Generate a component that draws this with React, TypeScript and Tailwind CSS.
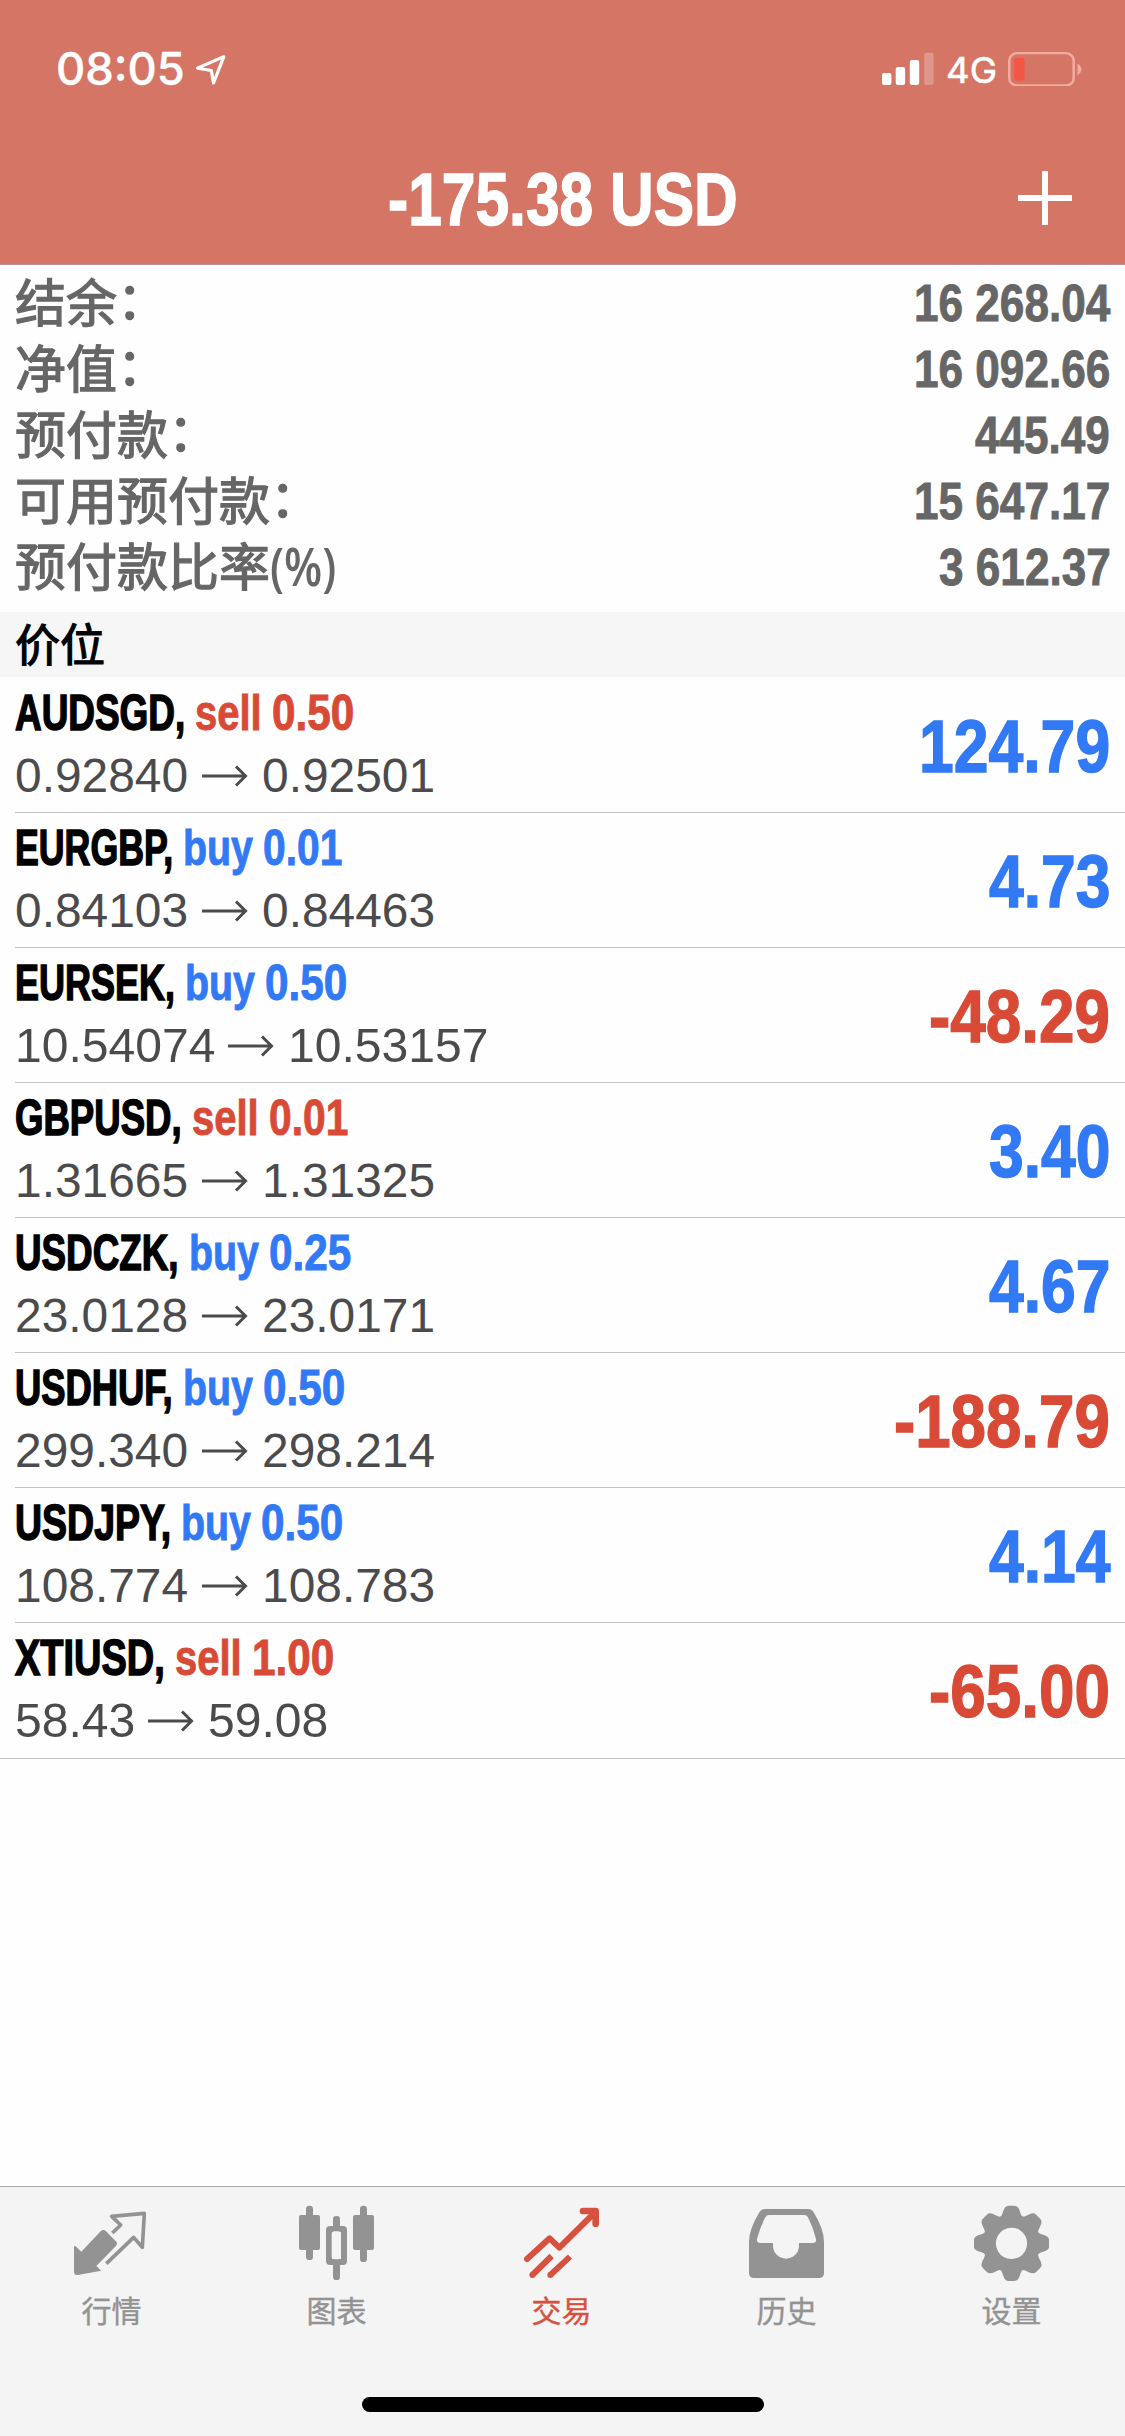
import { useLayoutEffect, useRef, useState, type ReactNode } from 'react';

/** Condenses its text horizontally so that it fills the given width. */
function Condensed({ width, children, className = '' }: { width: number; children: ReactNode; className?: string }) {
  const ref = useRef<HTMLSpanElement>(null);
  const [scale, setScale] = useState(1);
  useLayoutEffect(() => {
    if (ref.current) setScale(width / ref.current.offsetWidth);
  }, [width]);
  return (
    <span className={`inline-block whitespace-pre ${className}`} style={{ width }}>
      <span ref={ref} className="inline-block origin-left" style={{ transform: `scaleX(${scale})` }}>
        {children}
      </span>
    </span>
  );
}

const DIGIT = 24.5;
const summary = [
  { label: '结余', suffix: '：', value: '16 268.04' },
  { label: '净值', suffix: '：', value: '16 092.66' },
  { label: '预付款', suffix: '：', value: '445.49' },
  { label: '可用预付款', suffix: '：', value: '15 647.17' },
  { label: '预付款比率', suffix: '(%)', value: '3 612.37' },
];

/** Advance width of a figure string, where points and spaces are half a digit wide. */
const figureWidth = (text: string, digit: number) =>
  [...text].reduce((sum, ch) => sum + (/\d/.test(ch) ? digit : ch === '-' ? digit * 0.72 : digit / 2), 0);

type Position = { symbol: string; w: number; side: 'buy' | 'sell'; volume: string; from: string; to: string; profit: string };
const positions: Position[] = [
  { symbol: 'AUDSGD,', w: 170, side: 'sell', volume: '0.50', from: '0.92840', to: '0.92501', profit: '124.79' },
  { symbol: 'EURGBP,', w: 158, side: 'buy', volume: '0.01', from: '0.84103', to: '0.84463', profit: '4.73' },
  { symbol: 'EURSEK,', w: 160, side: 'buy', volume: '0.50', from: '10.54074', to: '10.53157', profit: '-48.29' },
  { symbol: 'GBPUSD,', w: 167, side: 'sell', volume: '0.01', from: '1.31665', to: '1.31325', profit: '3.40' },
  { symbol: 'USDCZK,', w: 163.5, side: 'buy', volume: '0.25', from: '23.0128', to: '23.0171', profit: '4.67' },
  { symbol: 'USDHUF,', w: 158, side: 'buy', volume: '0.50', from: '299.340', to: '298.214', profit: '-188.79' },
  { symbol: 'USDJPY,', w: 156, side: 'buy', volume: '0.50', from: '108.774', to: '108.783', profit: '4.14' },
  { symbol: 'XTIUSD,', w: 149.5, side: 'sell', volume: '1.00', from: '58.43', to: '59.08', profit: '-65.00' },
];

function Row({ p, last }: { p: Position; last: boolean }) {
  return (
    <div className={last ? 'border-b border-[#c4c4c6]' : ''}>
      <div className={`ml-[15px] flex h-[135px] justify-between pr-[15px] ${last ? '' : 'border-b border-[#c4c4c6]'}`}>
        <div className="pt-[5px]">
          <div className="flex h-[60px] text-[49.5px] leading-[60px] font-bold">
            <Condensed width={p.w} className="text-black [-webkit-text-stroke:1.5px_black]">{p.symbol}</Condensed>
            <span className={`flex pl-[10px] ${p.side === 'sell' ? 'text-[#d94a36] [-webkit-text-stroke:0.9px_#d94a36]' : 'text-[#3179f5] [-webkit-text-stroke:0.9px_#3179f5]'}`}>
              <Condensed width={p.side === 'sell' ? 67 : 70}>{p.side}</Condensed>
              <Condensed width={p.volume.endsWith('1') ? 79 : 82} className="ml-[10px]">{p.volume}</Condensed>
            </span>
          </div>
          <div className="flex h-[66px] items-center text-[48px] leading-[66px] text-[#4b4b4d]">
            <Condensed width={figureWidth(p.from, 26.7)}>{p.from}</Condensed>
            <svg className="ml-[13px] h-[22px] w-[46px]" viewBox="0 0 46 22" fill="none" stroke="currentColor" strokeWidth="3">
              <path d="M0 11H43M34 1.500L43.500 11L34 20.500" />
            </svg>
            <Condensed width={figureWidth(p.to, 26.7)} className="ml-[14px]">{p.to}</Condensed>
          </div>
        </div>
        <div className={`text-[74px] leading-[138px] font-bold ${p.profit.startsWith('-') ? 'text-[#d94a36] [-webkit-text-stroke:1.4px_#d94a36]' : 'text-[#3179f5] [-webkit-text-stroke:1.4px_#3179f5]'}`}>
          <Condensed width={figureWidth(p.profit, 34.7)}>{p.profit}</Condensed>
        </div>
      </div>
    </div>
  );
}

const QuotesIcon = () => (
  <svg viewBox="225 99 225 240" className="h-[80px] w-[75px]">
    <path d="M229 228L247 245L305 184Q313 176 321 184L350 213Q358 221 350 229L292 288L307 302L236 315Q225 316 225 306V232Q225 226 229 228Z" fill="currentColor" />
    <path d="M340 189L365 165L338 139L436 130L430 232L404 202L322 281" fill="none" stroke="currentColor" strokeWidth="11" strokeLinejoin="round" />
  </svg>
);
const ChartIcon = () => (
  <svg viewBox="897 99 225 240" className="h-[80px] w-[75px]" fill="currentColor">
    <rect x="918" y="107" width="21" height="163" rx="10" />
    <rect x="897" y="135" width="63" height="105" rx="6" />
    <rect x="1080" y="107" width="21" height="169" rx="10" />
    <rect x="1059" y="135" width="63" height="105" rx="6" />
    <rect x="999" y="138" width="21" height="40" rx="10" />
    <rect x="999" y="275" width="21" height="55" rx="10" />
    <rect x="987" y="177" width="45" height="99" rx="3" fill="none" stroke="currentColor" strokeWidth="18" />
    <rect x="995" y="184" width="28" height="84" rx="9" fill="#f4f4f4" />
  </svg>
);
const TradeIcon = () => (
  <svg viewBox="312 99 225 240" className="h-[80px] w-[75px]" fill="none" stroke="currentColor" strokeWidth="18">
    <path d="M321 267L389 205L418 233L526 126" strokeLinejoin="round" strokeLinecap="round" />
    <path d="M489 123H527V161" strokeWidth="20" strokeLinejoin="round" strokeLinecap="round" />
    <path d="M337 315L395 258M391 315L450 260" />
    <path d="M337 315h.1M391 315h.1" strokeLinecap="round" />
  </svg>
);
const HistoryIcon = () => (
  <svg viewBox="147 99 225 240" className="h-[80px] w-[75px]">
    <path
      fillRule="evenodd"
      fill="currentColor"
      d="M195 117H324Q335 117 341 127Q372 178 372 215V309Q372 324 357 324H162Q147 324 147 309V215Q147 178 178 127Q184 117 195 117ZM207 135Q200 135 196 142Q180 172 171 207Q169 219 181 219H219V227A39 39 0 0 0 297 227V219H338Q350 219 348 207Q339 172 325 144Q321 135 312 135Z"
    />
  </svg>
);
const SettingsIcon = () => (
  <svg viewBox="822 99 225 240" className="h-[80px] w-[75px]">
    <g fill="currentColor">
      <path
        fillRule="evenodd"
        d="M934.500 133A87 87 0 1 0 934.600 133ZM934.500 173A47 47 0 1 1 934.400 173Z"
      />
      {[0, 45, 90, 135, 180, 225, 270, 315].map((a) => (
        <path key={a} d="M896 146Q905 140 909 125Q914 107 926 107H943Q955 107 960 125Q964 140 973 146L960 160H909Z" transform={`rotate(${a} 934.5 220)`} />
      ))}
    </g>
  </svg>
);

const tabs = [
  { label: '行情', Icon: QuotesIcon },
  { label: '图表', Icon: ChartIcon },
  { label: '交易', Icon: TradeIcon, active: true },
  { label: '历史', Icon: HistoryIcon },
  { label: '设置', Icon: SettingsIcon },
];

export default function App() {
  return (
    <div className="flex h-[2436px] w-[1125px] flex-col overflow-hidden bg-[#fefefe] font-['Liberation_Sans','Noto_Sans_CJK_SC',sans-serif]">
      <header className="h-[265px] shrink-0 border-b border-[#b9938c] bg-[#d57565] text-white">
        <div className="flex h-[138px] items-center justify-between pr-[43px] pl-[56px] font-['Inter',sans-serif]">
          <div className="flex items-center">
            <Condensed width={129} className="text-[45px] leading-[60px] font-medium [-webkit-text-stroke:0.4px_white]">08:05</Condensed>
            <svg viewBox="545 155 90 100" className="ml-[10px] h-[33px] w-[32px]" fill="none" stroke="currentColor" strokeWidth="9" strokeLinejoin="round" preserveAspectRatio="none">
              <path d="M626 166L552 201L591 208L597 246Z" />
            </svg>
          </div>
          <div className="flex items-center">
            <svg viewBox="893 156 144 102" className="h-[34px] w-[52px]" fill="currentColor" preserveAspectRatio="none">
              <rect x="893" y="219" width="26" height="36" rx="6" />
              <rect x="931" y="201" width="26" height="54" rx="6" />
              <rect x="970" y="180" width="26" height="75" rx="6" />
              <rect x="1010" y="158" width="26" height="97" rx="6" opacity="0.25" />
            </svg>
            <Condensed width={51} className="ml-[12px] pt-[2px] text-[36px] leading-[60px] [-webkit-text-stroke:0.6px_white]">4G</Condensed>
            <svg viewBox="1245 155 207 104" className="ml-[11px] h-[34.700px] w-[74.500px]" preserveAspectRatio="none">
              <rect x="1248.500" y="158.500" width="179" height="97" rx="22" fill="none" stroke="#f3aba0" strokeWidth="7" />
              <rect x="1262" y="173" width="29" height="68" rx="9" fill="#f45545" />
              <path d="M1438 190Q1449 196 1449 207T1438 225Z" fill="#f3aba0" />
            </svg>
          </div>
        </div>
        <div className="grid h-[122px] grid-cols-[1fr_auto_1fr] items-center text-[74px] leading-[123px] font-bold">
          <Condensed width={350} className="col-start-2 [-webkit-text-stroke:1.5px_white]">-175.38 USD</Condensed>
          <svg viewBox="0 0 54 54" className="mr-[53px] mb-[3px] h-[54px] w-[54px] justify-self-end" fill="none" stroke="currentColor" strokeWidth="6">
            <path d="M0 27H54M27 0V54" />
          </svg>
        </div>
      </header>

      <section className="h-[347px] shrink-0 pt-[5px] pr-[15px] pl-[15px] text-[#666]">
        {summary.map(({ label, suffix, value }) => (
          <div key={label} className="flex h-[66px] justify-between">
            <span className="flex text-[51px] leading-[70px]">
              <span className="[-webkit-text-stroke:1.3px_#666]">{label}</span>
              {suffix === '：' ? (
                <span className="leading-[63px] [-webkit-text-stroke:1.3px_#666]">{suffix}</span>
              ) : (
                <Condensed width={66} className="font-['Open_Sans',sans-serif] text-[53px] leading-[64px] font-semibold">{suffix}</Condensed>
              )}
            </span>
            <Condensed width={figureWidth(value, DIGIT)} className="text-[52px] leading-[67px] font-bold [-webkit-text-stroke:0.9px_#666]">{value}</Condensed>
          </div>
        ))}
      </section>

      <h2 className="h-[65px] shrink-0 bg-[#f6f6f6] pl-[15px] text-[45px] leading-[70px] font-normal text-black [-webkit-text-stroke:1.2px_black]">价位</h2>

      <main className="flex-1 pt-px">
        {positions.map((p, i) => (
          <Row key={p.symbol} p={p} last={i === positions.length - 1} />
        ))}
      </main>

      <footer className="flex h-[250px] shrink-0 flex-col items-center border-t border-[#acacac] bg-[#f4f4f4]">
        <nav className="grid h-[210px] w-full -translate-x-px grid-cols-5 pt-[16px]">
          {tabs.map(({ label, Icon, active }) => (
            <div key={label} className={`flex flex-col items-center ${active ? 'text-[#d6513f]' : 'text-[#939393]'}`}>
              <Icon />
              <span className="mt-[3px] text-[30px] leading-[52px] [-webkit-text-stroke:0.4px_currentColor]">{label}</span>
            </div>
          ))}
        </nav>
        <div className="h-[15px] w-[402px] rounded-full bg-black" />
      </footer>
    </div>
  );
}
